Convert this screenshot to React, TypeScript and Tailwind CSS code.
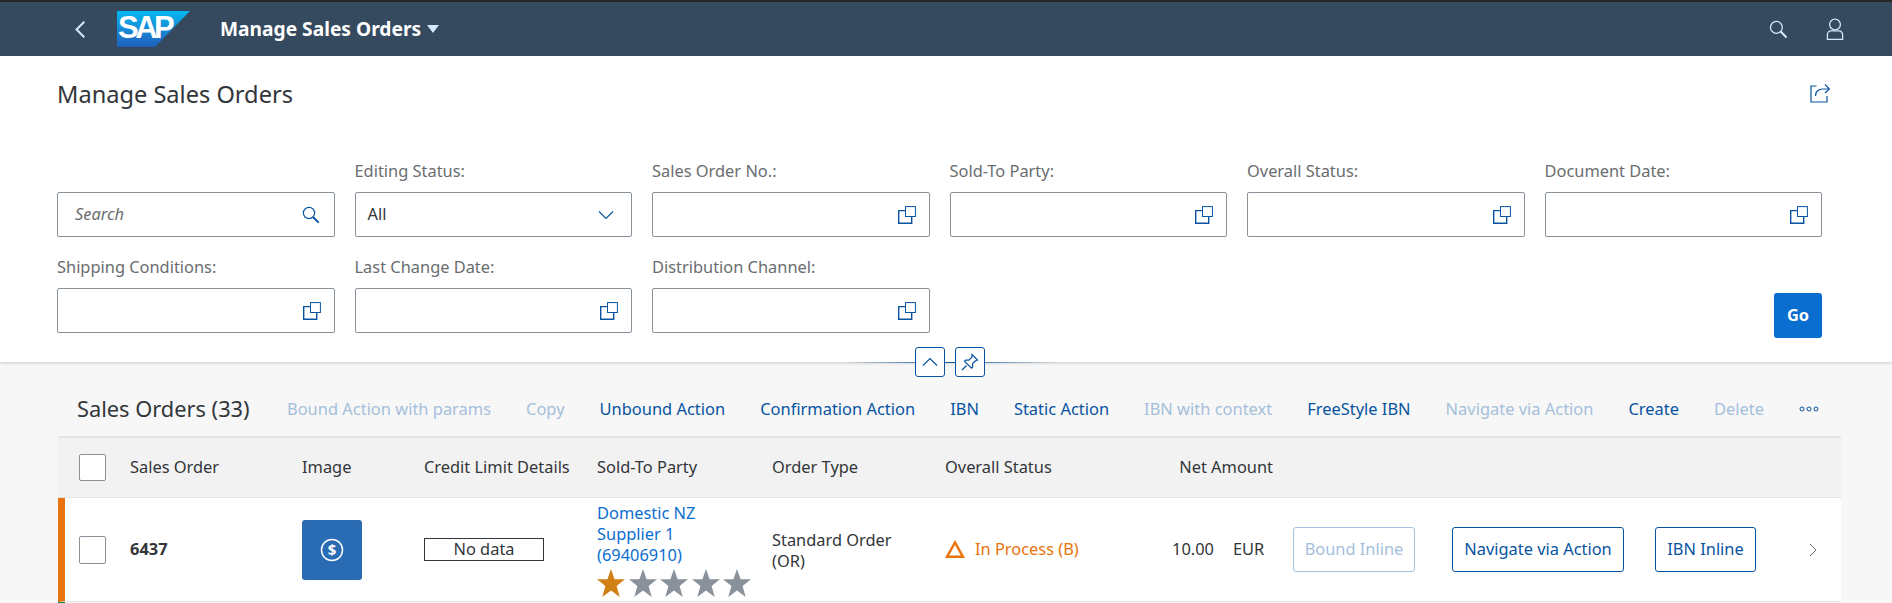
import React from 'react';

const FONT = "font-['Noto_Sans',sans-serif]";

const SearchIcon = ({ className }: { className?: string }) => (
    <svg viewBox="0 0 18 18" fill="none" stroke="currentColor" className={className}>
        <circle cx="7" cy="7" r="5.6" strokeWidth="1.2" />
        <path d="M11 11l5.6 5.6" strokeWidth="2" />
    </svg>
);

const ValueHelpIcon = () => (
    <svg viewBox="0 0 18 18" fill="none" stroke="currentColor" className="w-[18px] h-[18px] text-[#0854a0]">
        <path d="M7 4.600H.7v12.700h13V10.500" strokeWidth="1.400" />
        <rect x="7.500" y="0.600" width="9.900" height="9.900" strokeWidth="1" />
    </svg>
);

const FilterLabel = ({ children }: { children?: React.ReactNode }) => (
    <div className="h-[51px] pb-[13px] flex items-end text-[16.400px] text-[#6a6d70] leading-none">{children}</div>
);

const FilterField = ({ label }: { label: string }) => (
    <div>
        <FilterLabel>{label}</FilterLabel>
        <div className="h-[45px] bg-white border border-[#89919a] rounded-[2px] flex items-center justify-end pr-[13px]">
            <ValueHelpIcon />
        </div>
    </div>
);

const CollapseButton = ({ children }: { children: React.ReactNode }) => (
    <button className="w-[30px] h-[30px] bg-white border border-[#0854a0] rounded-[3px] flex items-center justify-center text-[#0854a0]">
        {children}
    </button>
);

const ToolbarAction = ({ label, disabled }: { label: string; disabled?: boolean }) => (
    <span className={disabled ? 'text-[#a5bfdb]' : 'text-[#0854a0]'}>{label}</span>
);

const Star = ({ filled }: { filled?: boolean }) => (
    <svg viewBox="0 0 28 28" className="w-[28px] h-[28px]">
        <path
            d="M14 0l3.600 10.300H28l-8.400 6.600 3.100 11.100L14 21.500 5.300 28l3.100-11.100L0 10.300h10.400z"
            fill={filled ? '#d08014' : '#89919a'}
        />
    </svg>
);

const InlineButton = ({ label, disabled, className }: { label: string; disabled?: boolean; className?: string }) => (
    <button
        className={`h-[45px] rounded-[3px] border bg-white text-[16.400px] whitespace-nowrap ${
            disabled ? 'border-[#a5c4e3] text-[#a5bfdb]' : 'border-[#0854a0] text-[#0854a0]'
        } ${className}`}
    >
        {label}
    </button>
);

const actions = [
    { label: 'Bound Action with params', disabled: true },
    { label: 'Copy', disabled: true },
    { label: 'Unbound Action' },
    { label: 'Confirmation Action' },
    { label: 'IBN' },
    { label: 'Static Action' },
    { label: 'IBN with context', disabled: true },
    { label: 'FreeStyle IBN' },
    { label: 'Navigate via Action', disabled: true },
    { label: 'Create' },
    { label: 'Delete', disabled: true },
];

export default function App() {
    return (
        <div className={`h-[603px] w-full overflow-hidden bg-[#f7f7f7] text-[#32363a] ${FONT}`}>
            {/* Shell bar */}
            <header className="h-[56px] bg-[#354a5f] border-t-2 border-[#262626] flex items-center text-white">
                <svg viewBox="0 0 14 22" fill="none" stroke="#d1e8ff" strokeWidth="2.400" className="ml-[74px] w-[12px] h-[19px]">
                    <path d="M12 2L3 11l9 9" />
                </svg>
                <div className="ml-[31px] relative w-[73px] h-[36px] [clip-path:polygon(0_0,100%_0,52%_100%,0_100%)] bg-gradient-to-b from-[#00b8f1] to-[#1e5fbb]">
                    <span className="absolute left-[1px] top-[1px] font-['Liberation_Sans',sans-serif] font-bold text-[31px] leading-[32px] tracking-[-3.500px] text-white">
                        SAP
                    </span>
                </div>
                <span className="ml-[30px] text-[19.200px] font-bold">Manage Sales Orders</span>
                <svg viewBox="0 0 12 8" className="ml-[6px] w-[12px] h-[8px]">
                    <path d="M0 0h12L6 8z" fill="#d1e8ff" />
                </svg>
                <SearchIcon className="ml-auto w-[19px] h-[19px] text-[#d1e8ff]" />
                <svg viewBox="0 0 18 22" fill="none" stroke="#d1e8ff" strokeWidth="1.300" className="ml-[38px] mr-[48px] w-[18px] h-[22px]">
                    <circle cx="9" cy="6.500" r="5.400" />
                    <path d="M1.400 21.400V16.500a3.600 3.600 0 0 1 3.600-3.600h8a3.600 3.600 0 0 1 3.600 3.600v4.900z" />
                </svg>
            </header>

            {/* Page header with filter bar */}
            <section className="relative h-[306px] bg-white pl-[57px] pr-[70px] shadow-[0_1px_3px_rgba(0,0,0,0.2)]">
                <div className="flex items-center justify-between h-[76px] pt-[2px]">
                    <h1 className="text-[23.600px] font-normal">Manage Sales Orders</h1>
                    <svg viewBox="0 0 20 20" fill="none" stroke="#0854a0" strokeWidth="1.200" className="-mr-[8px] -mt-[4px] w-[20px] h-[20px]">
                        <path d="M6.500 3H1v16h16v-6" />
                        <path d="M5.500 13c0-4.500 3-7 7.500-7H19" />
                        <path d="M15 1.500L19.500 6 15 10" />
                    </svg>
                </div>
                <div className="grid grid-cols-6 gap-x-5 mt-[9px]">
                    <div>
                        <FilterLabel />
                        <div className="h-[45px] border border-[#89919a] rounded-[2px] flex items-center justify-between pl-[17px] pr-[14px]">
                            <span className="text-[16.400px] italic text-[#6a6d70]">Search</span>
                            <SearchIcon className="w-[18px] h-[18px] text-[#0854a0]" />
                        </div>
                    </div>
                    <div>
                        <FilterLabel>Editing Status:</FilterLabel>
                        <div className="h-[45px] border border-[#89919a] rounded-[2px] flex items-center justify-between pl-[12px] pr-[17px]">
                            <span className="text-[16.400px]">All</span>
                            <svg viewBox="0 0 16 10" fill="none" stroke="#0854a0" strokeWidth="1.200" className="w-[16px] h-[10px]">
                                <path d="M1 1.500l7 7 7-7" />
                            </svg>
                        </div>
                    </div>
                    <FilterField label="Sales Order No.:" />
                    <FilterField label="Sold-To Party:" />
                    <FilterField label="Overall Status:" />
                    <FilterField label="Document Date:" />
                    <FilterField label="Shipping Conditions:" />
                    <FilterField label="Last Change Date:" />
                    <FilterField label="Distribution Channel:" />
                    <div className="col-span-3 flex justify-end items-end">
                        <button className="w-[48px] h-[45px] -mb-[5px] bg-[#0a6ed1] rounded-[3px] text-white font-bold text-[16.400px]">Go</button>
                    </div>
                </div>
                {/* Collapse and pin */}
                <div className="absolute left-[845px] w-[210px] bottom-[-15px] h-[30px] flex items-center justify-center">
                    <div className="absolute inset-x-0 top-[15px] h-[1px] bg-gradient-to-r from-transparent via-[#0854a0] to-transparent" />
                    <div className="relative flex gap-[10px]">
                        <CollapseButton>
                            <svg viewBox="0 0 16 10" fill="none" stroke="currentColor" strokeWidth="1.200" className="w-[16px] h-[10px]">
                                <path d="M1 8.500l7-7 7 7" />
                            </svg>
                        </CollapseButton>
                        <CollapseButton>
                            <svg viewBox="0 0 18 18" fill="none" stroke="currentColor" strokeWidth="1.200" className="w-[18px] h-[18px]">
                                <path d="M11 1.500l5.500 5.500-2 .8-3 3 .2 3.200-1.200 1.200-7-7 1.200-1.200 3.200.2 3-3z" />
                                <path d="M5.500 12.500L1 17" />
                            </svg>
                        </CollapseButton>
                    </div>
                </div>
            </section>

            {/* Table */}
            <section className="pl-[58px] pr-[51px]">
                <div className="h-[76px] pt-[20px] flex items-center pl-[19px] pr-[22px] border-b-2 border-[#e5e5e5]">
                    <h2 className="text-[21.800px] font-normal">Sales Orders (33)</h2>
                    <div className="ml-auto flex items-center gap-[35px] text-[16.450px]">
                        {actions.map((a) => (
                            <ToolbarAction key={a.label} {...a} />
                        ))}
                        <svg viewBox="0 0 20 6" fill="none" stroke="#0854a0" strokeWidth="1" className="w-[20px] h-[6px]">
                            <circle cx="3" cy="3" r="2" />
                            <circle cx="10" cy="3" r="2" />
                            <circle cx="17" cy="3" r="2" />
                        </svg>
                    </div>
                </div>
                <div className="grid grid-cols-[72px_172px_122px_173px_175px_173px_175px_1fr] h-[60px] items-center bg-[#f2f2f2] border-b border-[#e5e5e5] text-[16.400px]">
                    <div className="pl-[21px]">
                        <div className="w-[27px] h-[27px] bg-white border border-[#89919a] rounded-[2px]" />
                    </div>
                    <span>Sales Order</span>
                    <span>Image</span>
                    <span className="whitespace-nowrap">Credit Limit Details</span>
                    <span>Sold-To Party</span>
                    <span>Order Type</span>
                    <span>Overall Status</span>
                    <span className="w-[153px] text-right whitespace-nowrap">Net Amount</span>
                </div>
                <div className="grid grid-cols-[65px_172px_122px_173px_175px_173px_175px_1fr] h-[104px] items-center bg-white border-b border-[#e5e5e5] text-[16.400px] border-l-[7px] border-l-[#e9730c]">
                    <div className="pl-[14px]">
                        <div className="w-[27px] h-[28px] bg-white border border-[#89919a] rounded-[2px]" />
                    </div>
                    <span className="font-bold">6437</span>
                    <div className="w-[60px] h-[60px] rounded-[3px] bg-[#2a6cb3] flex items-center justify-center">
                        <svg viewBox="0 0 24 24" fill="none" className="w-[24px] h-[24px]">
                            <circle cx="12" cy="12" r="10.500" stroke="white" strokeWidth="1.500" />
                            <text x="12" y="17" textAnchor="middle" fill="white" fontSize="15" fontWeight="700" fontFamily="Noto Sans">$</text>
                        </svg>
                    </div>
                    <div className="w-[120px] h-[23px] border border-[#32363a] flex items-center justify-center">No data</div>
                    <div className="text-[#0a6ed1] leading-[21px]">
                        <div className="w-[120px]">Domestic NZ Supplier 1 (69406910)</div>
                        <div className="flex gap-[3.500px] mt-[4px]">
                            <Star filled />
                            <Star />
                            <Star />
                            <Star />
                            <Star />
                        </div>
                    </div>
                    <div className="leading-[21px] w-[140px]">Standard Order (OR)</div>
                    <div className="flex items-center gap-[10px] text-[#e9730c]">
                        <svg viewBox="0 0 20 18" fill="none" stroke="#e9730c" strokeWidth="2.400" className="w-[20px] h-[18px]">
                            <path d="M10 2.400L18 16.800H2z" />
                        </svg>
                        <span className="whitespace-nowrap">In Process (B)</span>
                    </div>
                    <div className="flex items-center">
                        <span className="w-[94px] text-right">10.00</span>
                        <span className="ml-[19px] w-[35px]">EUR</span>
                        <InlineButton label="Bound Inline" disabled className="ml-[25px] w-[122px]" />
                        <InlineButton label="Navigate via Action" className="ml-[37px] w-[172px]" />
                        <InlineButton label="IBN Inline" className="ml-[31px] w-[101px]" />
                        <svg viewBox="0 0 8 14" fill="none" stroke="#6a6d70" strokeWidth="1" className="ml-[53px] w-[8px] h-[14px]">
                            <path d="M1 1l6 6-6 6" />
                        </svg>
                    </div>
                </div>
                <div className="w-[7px] h-[2px] bg-[#107e3e]" />
            </section>
        </div>
    );
}
